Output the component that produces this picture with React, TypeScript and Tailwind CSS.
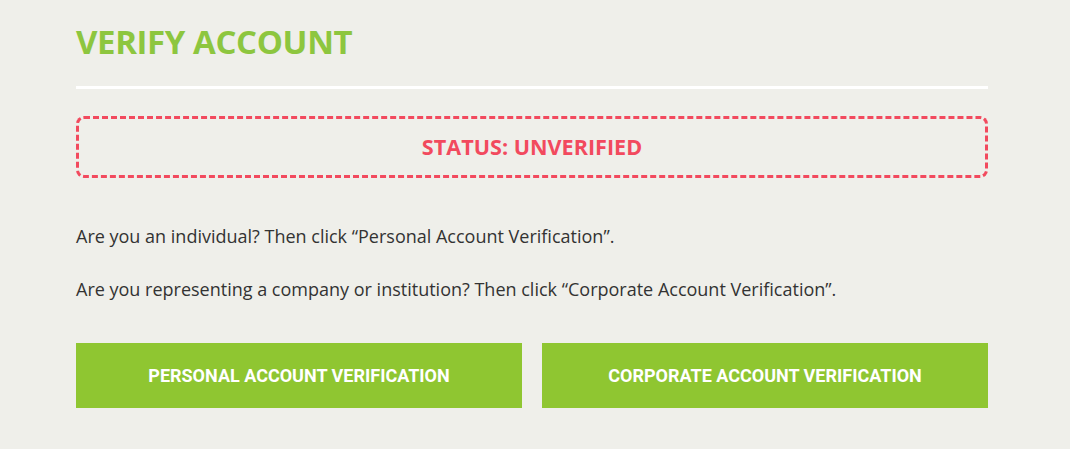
export default function App() {
  return (
    <div className="min-h-[449px] w-full bg-[#efefea]" style={{ fontFamily: "'Open Sans', sans-serif" }}>
      <div className="ml-[76px] w-[912px] pt-[20px]">
        <h1 className="text-[33px] font-bold leading-[44px] tracking-[-0.4px] text-[#8dc63f]">VERIFY ACCOUNT</h1>
        <div className="mt-[22px] h-[3px] bg-white" />
        <div className="mt-[27px] flex h-[62px] items-center justify-center rounded-[8px] border-[3px] border-dashed border-[#f24a5e]">
          <span className="pt-[1px] text-[21.6px] font-bold text-[#f24a5e]">STATUS: UNVERIFIED</span>
        </div>
        <div className="mt-[45px] space-y-[27px] text-[18px] leading-[26px] text-[#333]">
          <p>Are you an individual? Then click “Personal Account Verification”.</p>
          <p>Are you representing a company or institution? Then click “Corporate Account Verification”.</p>
        </div>
        <div className="mt-[41px] grid grid-cols-2 gap-[20px]">
          {["PERSONAL ACCOUNT VERIFICATION", "CORPORATE ACCOUNT VERIFICATION"].map((t) => (
            <button
              key={t}
              className="flex h-[65px] items-center justify-center bg-[#8fc631] text-[18px] font-bold text-white"
              style={{ fontFamily: "Roboto, sans-serif" }}
            >
              {t}
            </button>
          ))}
        </div>
      </div>
    </div>
  );
}
